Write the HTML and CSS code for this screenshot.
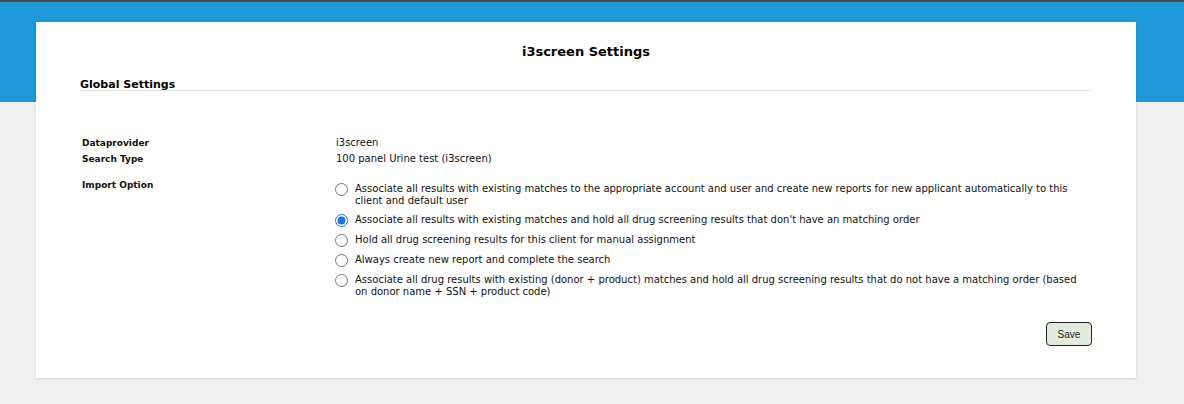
FILE: index.html
```html
<!doctype html>
<html lang="en">
 <head>
  <meta charset="utf-8">
  <title>i3screen Settings</title>
  <link rel="stylesheet" href="styles.css">
 </head>
 <body>
  <div class="top-strip"></div>
  <div class="page">
   <div class="band"></div>
   <div class="card">
    <h1 class="card-title">i3screen Settings</h1>
    <h2 class="section-title">Global Settings</h2>
    <div class="settings">
     <div class="row">
      <div class="label">Dataprovider</div>
      <div class="value">i3screen</div>
     </div>
     <div class="row">
      <div class="label">Search Type</div>
      <div class="value">100 panel Urine test (i3screen)</div>
     </div>
     <div class="row row-import">
      <div class="label">Import Option</div>
      <div class="value options">
       <label class="option"><input type="radio" name="import"><span>Associate all results with existing matches to the appropriate account and user and create new reports for new applicant automatically to this client and default user</span></label>
       <label class="option"><input type="radio" name="import" checked><span>Associate all results with existing matches and hold all drug screening results that don't have an matching order</span></label>
       <label class="option"><input type="radio" name="import"><span>Hold all drug screening results for this client for manual assignment</span></label>
       <label class="option"><input type="radio" name="import"><span>Always create new report and complete the search</span></label>
       <label class="option"><input type="radio" name="import"><span>Associate all drug results with existing (donor + product) matches and hold all drug screening results that do not have a matching order (based on donor name + SSN + product code)</span></label>
      </div>
     </div>
    </div>
    <div class="actions">
     <button class="btn-save" type="button">Save</button>
    </div>
   </div>
  </div>
 </body>
</html>
```
FILE: styles.css
```css
body {
	margin: 0;
	padding: 0;
	background-color: #efefef;
	font-family: "DejaVu Sans", Verdana, sans-serif;
	color: #111;
}

.top-strip {
	height: 2px;
	background-color: #474747;
}

.page {
	position: relative;
	padding: 20px 48px 26px 36px;
}

/* blue header band behind the card */
.band {
	position: absolute;
	left: 0;
	right: 0;
	top: 0;
	height: 100px;
	background-color: #1e98d6;
}

.card {
	position: relative;
	background-color: #ffffff;
	box-shadow: 0 1px 2px rgba(0,0,0,0.12);
	padding: 22px 44px 32px 44px;
	box-sizing: border-box;
	height: 356px;
}

.card-title {
	margin: 0;
	text-align: center;
	font-size: 13px;
	font-weight: bold;
	line-height: 16px;
	color: #000;
}

.section-title {
	margin: 19px 0 0 0;
	padding-bottom: 0;
	font-size: 11px;
	font-weight: bold;
	line-height: 11px;
	color: #000;
	border-bottom: 1px solid #e2e2e2;
}

.settings {
	margin-top: 44px;
	font-size: 10px;
}

.row {
	display: grid;
	grid-template-columns: 254px 1fr;
	margin-left: 2px;
	line-height: 16px;
}

.row-import {
	margin-top: 10px;
}

.label {
	font-weight: bold;
	font-size: 9px;
}

.value {
	font-size: 10px;
}

.options {
	margin-left: -1px;
	padding-top: 6px;
	padding-right: 10px;
}

.option {
	display: flex;
	align-items: flex-start;
	line-height: 12px;
	margin-bottom: 7px;
}

.option input {
	margin: 0 7px 0 0;
	width: 13px;
	height: 13px;
	flex: none;
	accent-color: #1a73e8;
}

.actions {
	display: flex;
	justify-content: flex-end;
	margin-top: 17px;
}

.btn-save {
	font-family: "Liberation Sans", Arial, sans-serif;
	font-size: 10px;
	color: #222;
	background-color: #e1ecdc;
	border: 1px solid #222;
	border-radius: 4px;
	width: 46px;
	height: 24px;
	padding: 0;
}
```
